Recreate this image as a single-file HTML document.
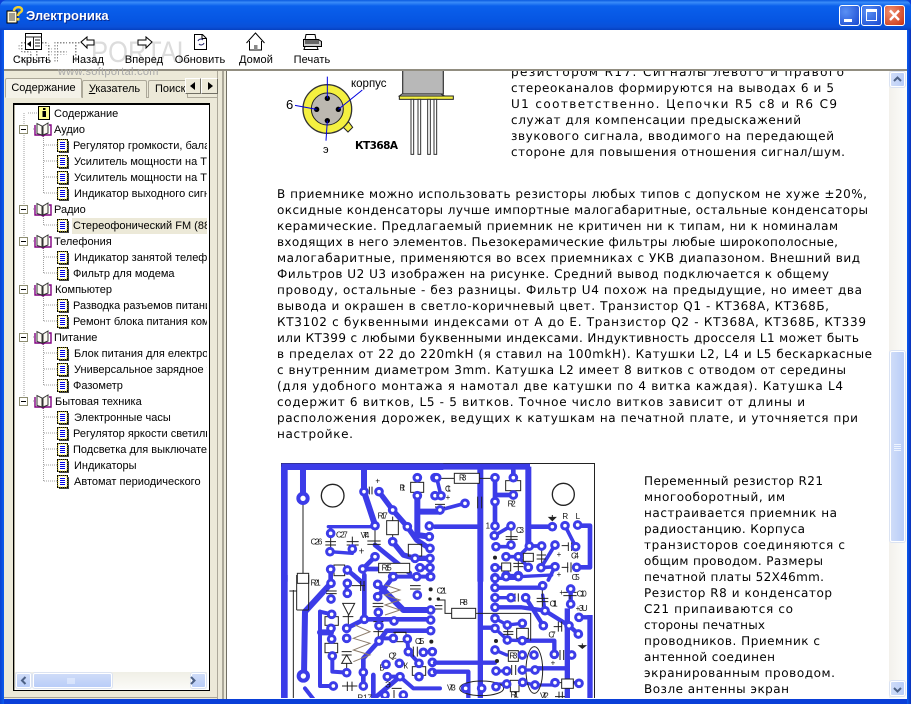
<!DOCTYPE html>
<html><head><meta charset="utf-8"><style>
html,body{margin:0;padding:0;background:#fff}
#w{position:relative;width:911px;height:704px;overflow:hidden;font-family:"Liberation Sans",sans-serif;background:#0a3fd8}
.a{position:absolute}
#title{left:0;top:0;width:911px;height:30px;background:linear-gradient(#0a5ae0 0,#3a8cf8 8%,#0a60ec 20%,#0655e2 70%,#0a50d8 90%,#0640c0 100%);border-radius:7px 7px 0 0}
#tt{left:26px;top:8px;color:#fff;font:bold 13px "Liberation Sans",sans-serif;text-shadow:1px 1px 0 #0a2a90}
.tb{top:5px;width:21px;height:21px;border:1px solid #fff;border-radius:3px;box-sizing:border-box;background:radial-gradient(circle at 30% 30%,#5a90f4,#1848d0)}
#client{left:4px;top:30px;width:903px;height:669px;background:#fff}
#tool{left:4px;top:30px;width:903px;height:39px;background:#fff;border-bottom:2px solid #918d80;box-sizing:content-box}
.lb{position:absolute;top:54px;width:56px;text-align:center;font-size:11px;color:#000;letter-spacing:.1px}
#pane{left:4px;top:71px;width:214px;height:628px;background:#ece9d8}
#split{left:218px;top:71px;width:9px;height:628px;background:#ece9d8;border-right:0}
#tree{left:13px;top:103px;width:197px;height:588px;box-sizing:border-box;border:2px solid #000;border-right:1px solid #000;border-bottom:1px solid #000;border-left:1px solid #000;background:#fff;box-shadow:inset 1px 0 #aca899}
.t{position:absolute;font-size:11px;white-space:nowrap;color:#000;line-height:14px}
.tab{position:absolute;font-size:11px;white-space:nowrap;background:#f4f2e8;border:1px solid #aca899;border-bottom:0;box-sizing:border-box;text-align:center;border-radius:2px 2px 0 0}
.sb{position:absolute;background:linear-gradient(90deg,#cfdcf8,#b9cdf8);border:1px solid #fff;border-radius:2px;box-sizing:border-box;box-shadow:0 0 0 1px #dbe3f2}
.hb{background:linear-gradient(#cfdcf8,#b9cdf8)}
</style></head><body><div id="w">
<div class="a" id="title"></div>
<svg class="a" style="left:6px;top:6px" width="18" height="18" viewBox="0 0 18 18"><rect x="1" y="5" width="10" height="12" fill="#fff8d8" stroke="#000"/><path d="M3 8h6M3 10h6M3 12h6M3 14h6" stroke="#444"/><path d="M8 5c0-5 8-5 8-1 0 3-4 2-4 6" fill="none" stroke="#f0d030" stroke-width="2.4"/><rect x="10.8" y="12" width="2.6" height="2.6" fill="#f0d030"/></svg>
<div class="a" id="tt">Электроника</div>
<div class="a tb" style="left:839px"><div class="a" style="left:4px;top:13px;width:8px;height:3px;background:#fff"></div></div>
<div class="a tb" style="left:861px"><div class="a" style="left:4px;top:3px;width:11px;height:12px;border:1px solid #fff;border-top:3px solid #fff;box-sizing:border-box"></div></div>
<div class="a tb" style="left:884px;background:radial-gradient(circle at 30% 30%,#f09070,#c83010)"><svg class="a" style="left:0;top:0" width="19" height="19"><path d="M5 4.500L14 14M14 4.500L5 14" stroke="#fff" stroke-width="2.400"/></svg></div>
<div class="a" id="client"></div>
<div class="a" id="tool"></div>

<svg class="a" style="left:0;top:30px" width="340" height="40" viewBox="0 30 340 40" font-family="'Liberation Sans',sans-serif">
<defs><pattern id="dt" width="3" height="3" patternUnits="userSpaceOnUse"><rect width="1.500" height="1.500" fill="#8a8a8a"/></pattern></defs>
<text x="17" y="62" font-size="30" font-weight="bold" fill="url(#dt)" textLength="66" lengthAdjust="spacingAndGlyphs">SOFT</text>
<text x="91" y="62" font-size="30" fill="#dcdcdc" textLength="100" lengthAdjust="spacingAndGlyphs">PORTAL</text>
</svg>
<svg class="a" style="left:0;top:30px" width="340" height="40" viewBox="0 30 340 40" fill="none" stroke="#000">
<rect x="25.500" y="33.500" width="16" height="16" fill="#fff"/><path d="M25 37h17M33.500 37v12M35 40h5M35 43h5M35 46h5" stroke="#222"/><path d="M31 41l-4 3 4 3z" fill="#000" stroke="none"/>
<path d="M81 42l6-5v3h7v5h-7v3z" fill="#fff"/>
<path d="M152 42l-6-5v3h-8v5h8v3z" fill="#fff"/>
<path d="M194.500 34.500h8l4 4v11h-12z" fill="#fff"/><path d="M202 34.500v4h4" /><path d="M198 41a3 3 0 0 1 5-1M204 43a3 3 0 0 1-5 1" stroke="#226"/>
<path d="M246.500 43l9-10 9 10M249.500 41v9h12v-9" fill="#fff"/><rect x="254" y="45" width="3.500" height="5" fill="#888" stroke="none"/>
<path d="M306 34.500h9l1 5h-11z" fill="#fff"/><path d="M303.500 39.500h15l3 2v5h-18z" fill="#ccc"/><path d="M305 46.500h12l1 3h-14zM305 41h14M305 43h14" fill="#fff"/>
</svg>
<div class="lb" style="left:4px">Скрыть</div><div class="lb" style="left:60px">Назад</div><div class="lb" style="left:116px">Вперед</div><div class="lb" style="left:172px">Обновить</div><div class="lb" style="left:228px">Домой</div><div class="lb" style="left:284px">Печать</div>

<div class="a" id="pane"></div>
<div class="a" id="split"></div>
<div class="a" style="left:58px;top:66px;font:11px 'Liberation Sans',sans-serif;color:#a8a8a8;letter-spacing:.3px;white-space:nowrap">www.softportal.com</div>
<div class="a" style="left:217px;top:71px;width:1px;height:628px;background:#aca899"></div>
<div class="a" style="left:222px;top:71px;width:2px;height:628px;background:#aca899"></div>
<div class="a" style="left:226px;top:71px;width:1px;height:628px;background:#716f64"></div>
<div class="a" style="left:4px;top:697px;width:214px;height:1px;background:#aca899"></div>
<div class="a" style="left:5px;top:97px;width:212px;height:1px;background:#aca899"></div>
<div class="tab" style="left:82px;top:80px;width:65px;height:18px;line-height:17px;background:#ece9d8"><u>У</u>казатель</div>
<div class="tab" style="left:148px;top:80px;width:40px;height:18px;line-height:17px;text-align:left;padding-left:6px;overflow:hidden;background:#ece9d8">Поиск</div>
<div class="tab" style="left:5px;top:78px;width:77px;height:20px;line-height:19px;background:#f4f2e8;border-bottom:1px solid #f4f2e8">Содержание</div>
<div class="a" style="left:185px;top:78px;width:16px;height:16px;background:#ece9d8;border:1px solid;border-color:#fff #716f64 #716f64 #fff;box-sizing:border-box"></div>
<div class="a" style="left:201px;top:78px;width:17px;height:16px;background:#ece9d8;border:1px solid;border-color:#fff #716f64 #716f64 #fff;box-sizing:border-box"></div>
<svg class="a" style="left:185px;top:78px" width="33" height="16"><path d="M5 8l5-4v8zM28 8l-5-4v8z" fill="#000"/></svg>

<div class="a" id="tree"></div>
<div class="a" style="left:72px;top:218px;width:135px;height:16px;background:#ece9d8"></div>
<svg class="a" style="left:14px;top:105px" width="194" height="390" viewBox="14 105 194 390">
<defs>
<g id="pg"><rect x="0.500" y="0.500" width="10" height="12" fill="#fff" stroke="#000"/><rect x="1" y="1" width="9" height="11" fill="none" stroke="#f0e030" stroke-dasharray="1 1"/><path d="M3 3.500h5M3 5.500h5M3 7.500h5M3 9.500h5" stroke="#0000e0"/><path d="M11.500 2v11.500H2" stroke="#444" fill="none"/></g>
<g id="bk"><path d="M1 3v10h6c1 0 1 1 2 1s1-1 2-1h6V3h-2" fill="#fff" stroke="#800080" stroke-width="1.400"/><path d="M3 1.500v10l5 1.500V4zM14 1l-5 3v9l5-2z" fill="#fbfaf2" stroke="#333"/></g>
<g id="mn"><rect x="0.500" y="0.500" width="8" height="8" fill="#fff" stroke="#8c8c70"/><path d="M2 4.500h5" stroke="#000"/></g>
</defs>
<g stroke="#a0a0a0" stroke-dasharray="1 1" fill="none">
<path d="M24 113v288M28 113h10M33 129h4M33 209h4M33 241h4M33 289h4M33 337h4M33 401h4"/>
<path d="M43.500 136v57M44 145h13M44 161h13M44 177h13M44 193h13"/>
<path d="M43.500 216v9M44 225h13"/><path d="M43.500 248v25M44 257h13M44 273h13"/>
<path d="M43.500 296v25M44 305h13M44 321h13"/><path d="M43.500 344v41M44 353h13M44 369h13M44 385h13"/>
<path d="M43.500 408v73M44 417h13M44 433h13M44 449h13M44 465h13M44 481h13"/>
</g>
<use href="#mn" x="19" y="125"/><use href="#mn" x="19" y="205"/><use href="#mn" x="19" y="237"/><use href="#mn" x="19" y="285"/><use href="#mn" x="19" y="333"/><use href="#mn" x="19" y="397"/>
<use href="#bk" x="34" y="122"/><use href="#bk" x="34" y="202"/><use href="#bk" x="34" y="234"/><use href="#bk" x="34" y="282"/><use href="#bk" x="34" y="330"/><use href="#bk" x="34" y="394"/>
<rect x="38.500" y="106.500" width="11" height="13" fill="#ffff90" stroke="#000"/><rect x="43" y="108" width="2.500" height="2" fill="#000"/><rect x="42.500" y="111" width="3.500" height="6" fill="#000"/>
<use href="#pg" x="57" y="139"/><use href="#pg" x="57" y="155"/><use href="#pg" x="57" y="171"/><use href="#pg" x="57" y="187"/><use href="#pg" x="57" y="219"/><use href="#pg" x="57" y="251"/><use href="#pg" x="57" y="267"/><use href="#pg" x="57" y="299"/><use href="#pg" x="57" y="315"/><use href="#pg" x="57" y="347"/><use href="#pg" x="57" y="363"/><use href="#pg" x="57" y="379"/><use href="#pg" x="57" y="411"/><use href="#pg" x="57" y="427"/><use href="#pg" x="57" y="443"/><use href="#pg" x="57" y="459"/><use href="#pg" x="57" y="475"/>
</svg>
<div class="a" style="left:14px;top:105px;width:193px;height:400px;overflow:hidden">
<div class="t" style="left:40px;top:2px">Содержание</div>
<div class="t" style="left:40px;top:18px">Аудио</div>
<div class="t" style="left:59px;top:34px">Регулятор громкости, баланса</div>
<div class="t" style="left:60px;top:50px">Усилитель мощности на ТDA</div>
<div class="t" style="left:60px;top:66px">Усилитель мощности на ТDA</div>
<div class="t" style="left:60px;top:82px">Индикатор выходного сигнала</div>
<div class="t" style="left:40px;top:98px">Радио</div>
<div class="t" style="left:59px;top:114px">Стереофонический FM (88-108)</div>
<div class="t" style="left:40px;top:130px">Телефония</div>
<div class="t" style="left:60px;top:146px">Индикатор занятой телефонной</div>
<div class="t" style="left:59px;top:162px">Фильтр для модема</div>
<div class="t" style="left:41px;top:178px">Компьютер</div>
<div class="t" style="left:59px;top:194px">Разводка разъемов питания</div>
<div class="t" style="left:59px;top:210px">Ремонт блока питания компьютера</div>
<div class="t" style="left:40px;top:226px">Питание</div>
<div class="t" style="left:60px;top:242px">Блок питания для електро</div>
<div class="t" style="left:60px;top:258px">Универсальное зарядное устройство</div>
<div class="t" style="left:59px;top:274px">Фазометр</div>
<div class="t" style="left:41px;top:290px">Бытовая техника</div>
<div class="t" style="left:60px;top:306px">Электронные часы</div>
<div class="t" style="left:59px;top:322px">Регулятор яркости светильника</div>
<div class="t" style="left:59px;top:338px">Подсветка для выключателя</div>
<div class="t" style="left:60px;top:354px">Индикаторы</div>
<div class="t" style="left:60px;top:370px">Автомат периодического</div>
</div>

<div class="a" style="left:15px;top:672px;width:192px;height:17px;background:linear-gradient(#f0efe6,#fbfbf8)"></div>
<div class="sb hb" style="left:16px;top:673px;width:15px;height:15px"></div>
<div class="sb hb" style="left:33px;top:673px;width:79px;height:15px"></div>
<div class="sb hb" style="left:191px;top:673px;width:15px;height:15px"></div>
<svg class="a" style="left:16px;top:673px" width="192" height="16" fill="none"><path d="M9.500 4l-3.500 3.500 3.500 3.500M175 4l3.500 3.500-3.500 3.500" stroke="#4d6185" stroke-width="2"/><path d="M52 5v6M54 5v6M56 5v6M58 5v6" stroke="#eef4ff"/></svg>

<svg class="a" style="left:227px;top:71px" width="662" height="627" viewBox="227 71 662 627" font-family="'DejaVu Sans',sans-serif" font-size="12" fill="#000">
<g text-rendering="geometricPrecision">
<text x="511" y="76" textLength="333">резистором R17. Сигналы левого и правого</text>
<text x="511" y="92" textLength="323">стереоканалов формируются на выводах 6 и 5</text>
<text x="511" y="108" textLength="326">U1 соответственно. Цепочки R5 с8 и R6 С9</text>
<text x="511" y="124" textLength="290">служат для компенсации предыскажений</text>
<text x="511" y="140" textLength="323">звукового сигнала, вводимого на передающей</text>
<text x="511" y="156" textLength="334">стороне для повышения отношения сигнал/шум.</text>
<text x="277" y="198" textLength="590">В приемнике можно использовать резисторы любых типов с допуском не хуже ±20%,</text>
<text x="277" y="214" textLength="591">оксидные конденсаторы лучше импортные малогабаритные, остальные конденсаторы</text>
<text x="277" y="230" textLength="561">керамические. Предлагаемый приемник не критичен ни к типам, ни к номиналам</text>
<text x="277" y="246" textLength="561">входящих в него элементов. Пьезокерамические фильтры любые широкополосные,</text>
<text x="277" y="262" textLength="583">малогабаритные, применяются во всех приемниках с УКВ диапазоном. Внешний вид</text>
<text x="277" y="278" textLength="552">Фильтров U2 U3 изображен на рисунке. Средний вывод подключается к общему</text>
<text x="277" y="294" textLength="585">проводу, остальные - без разницы. Фильтр U4 похож на предыдущие, но имеет два</text>
<text x="277" y="310" textLength="552">вывода и окрашен в светло-коричневый цвет. Транзистор Q1 - КТ368А, КТ368Б,</text>
<text x="277" y="326" textLength="589">КТ3102 с буквенными индексами от А до Е. Транзистор Q2 - КТ368А, КТ368Б, КТ339</text>
<text x="277" y="342" textLength="582">или КТ399 с любыми буквенными индексами. Индуктивность дросселя L1 может быть</text>
<text x="277" y="358" textLength="595">в пределах от 22 до 220mkH (я ставил на 100mkH). Катушки L2, L4 и L5 бескаркасные</text>
<text x="277" y="374" textLength="569">с внутренним диаметром 3mm. Катушка L2 имеет 8 витков с отводом от середины</text>
<text x="277" y="390" textLength="566">(для удобного монтажа я намотал две катушки по 4 витка каждая). Катушка L4</text>
<text x="277" y="406" textLength="528">содержит 6 витков, L5 - 5 витков. Точное число витков зависит от длины и</text>
<text x="277" y="422" textLength="581">расположения дорожек, ведущих к катушкам на печатной плате, и уточняется при</text>
<text x="277" y="438" textLength="76">настройке.</text>
<text x="644" y="485" textLength="179">Переменный резистор R21</text>
<text x="644" y="501" textLength="141">многооборотный, им</text>
<text x="644" y="517" textLength="193">настраивается приемник на</text>
<text x="644" y="533" textLength="161">радиостанцию. Корпуса</text>
<text x="644" y="549" textLength="201">транзисторов соединяются с</text>
<text x="644" y="565" textLength="179">общим проводом. Размеры</text>
<text x="644" y="581" textLength="180">печатной платы 52Х46mm.</text>
<text x="644" y="597" textLength="188">Резистор R8 и конденсатор</text>
<text x="644" y="613" textLength="149">С21 припаиваются со</text>
<text x="644" y="629" textLength="121">стороны печатных</text>
<text x="644" y="645" textLength="176">проводников. Приемник с</text>
<text x="644" y="661" textLength="131">антенной соединен</text>
<text x="644" y="677" textLength="191">экранированным проводом.</text>
<text x="644" y="693" textLength="145">Возле антенны экран</text>
</g>

<!-- transistor -->
<g transform="translate(230 60) scale(.33333)">
<path d="M338 200l18-14 12 16-14 14z" fill="#f4f040" stroke="#222" stroke-width="3"/>
<circle cx="292" cy="147" r="73" fill="#f4f040" stroke="#333" stroke-width="4"/>
<circle cx="292" cy="147" r="48" fill="#bcb8b0" stroke="#222" stroke-width="3"/>
<g fill="#000"><circle cx="292" cy="115" r="8"/><circle cx="260" cy="148" r="8"/><circle cx="325" cy="148" r="8"/><circle cx="292" cy="182" r="8"/></g>
<path d="M292 50v65M195 136l65 12M397 90l-72 58M292 182l-4 60" stroke="#0000e0" stroke-width="3" fill="none"/>
<rect x="518" y="30" width="122" height="72" fill="#b8b8b8" stroke="#444" stroke-width="4"/>
<path d="M516 102h116l12 6H508z" fill="#ccc" stroke="#333" stroke-width="3"/>
<rect x="508" y="108" width="162" height="10" fill="#f4f040" stroke="#222" stroke-width="3"/>
<g fill="#fff" stroke="#333" stroke-width="3"><path d="M543 118h8v165h-8zM564 118h8v165h-8zM593 118h8v165h-8zM612 118h8v165h-8z"/></g>
</g>
<text x="351" y="87" font-family="'Liberation Sans',sans-serif" font-size="11.500">корпус</text>
<text x="286" y="109" font-family="'Liberation Sans',sans-serif" font-size="13">6</text>
<text x="323" y="153" font-family="'Liberation Sans',sans-serif" font-size="11">э</text>
<text x="355" y="149" font-family="'DejaVu Sans',sans-serif" font-weight="bold" font-size="10.500" textLength="43">КТ368А</text>

<!-- PCB -->
<rect x="281.500" y="463.500" width="313" height="240" fill="#fff" stroke="#222"/>
<defs>
<g id="p"><circle r="10" fill="#fff" stroke="#3c3ce8" stroke-width="9"/></g>
<g id="P"><circle r="14" fill="#fff" stroke="#3c3ce8" stroke-width="12"/></g>
</defs>
<g font-family="'Liberation Sans',sans-serif" font-size="24" fill="#111">
<g transform="translate(270 455) scale(.33333)">
<g fill="none" stroke="#3c3ce8" stroke-linejoin="round" stroke-linecap="round">
<path d="M34 35H520M43 35V380" stroke-width="20" stroke-linecap="butt"/>
<path d="M99 45V130M282 45V110L315 210M442 122V240L478 245M442 170H510" stroke-width="18"/>
<path d="M327 110L368 165L412 215L440 255L478 280M368 260L400 300L435 310H480" stroke-width="16"/>
<path d="M175 215H315M180 290L247 295V282M182 235V215" stroke-width="10"/>
<path d="M315 305L278 342M315 270L420 355M182 343V380M232 345L280 385M278 342H330" stroke-width="14"/>
<path d="M440 338H480M360 365H480" stroke-width="12"/>
</g>
<g fill="none" stroke="#222" stroke-width="3">
<circle cx="188" cy="122" r="34" stroke-width="4"/><path d="M99 130V355M315 212V270M368 185V260M166 260H198M166 270H198M230 260H266M230 270H266M292 258H332M292 268H332M306 95V118M298 95V118M182 245V285M247 245V285"/>
<rect x="422" y="82" width="39" height="30" fill="#fff"/><rect x="350" y="197" width="35" height="42" fill="#fff"/><rect x="415" y="268" width="40" height="35" fill="#fff" fill-opacity=".2"/><rect x="326" y="325" width="93" height="28" fill="#fff"/><rect x="192" y="330" width="32" height="32" fill="#fff"/><rect x="82" y="355" width="34" height="30" fill="#fff"/>
</g>
<text x="388" y="106" textLength="18">R1</text><text x="323" y="190" textLength="30">R17</text><text x="122" y="268" textLength="35">C26</text><text x="198" y="247" textLength="35">C27</text><text x="272" y="249" textLength="26">VT4</text><text x="335" y="346" textLength="30">R15</text><text x="316" y="86">+</text><text x="266" y="299" font-size="30">+</text>
<use href="#P" x="99" y="130"/>
<use href="#p" x="282" y="110"/><use href="#p" x="327" y="110"/><use href="#p" x="368" y="165"/><use href="#p" x="412" y="215"/><use href="#p" x="182" y="235"/><use href="#p" x="180" y="290"/><use href="#p" x="247" y="282"/><use href="#p" x="315" y="212"/><use href="#p" x="315" y="305"/><use href="#p" x="278" y="342"/><use href="#p" x="182" y="343"/><use href="#p" x="232" y="345"/><use href="#p" x="368" y="260"/><use href="#p" x="435" y="310"/><use href="#p" x="480" y="310"/><use href="#p" x="480" y="280"/><use href="#p" x="478" y="245"/><use href="#p" x="450" y="338"/><use href="#p" x="480" y="338"/><use href="#p" x="368" y="365"/><use href="#p" x="480" y="365"/><use href="#p" x="442" y="68"/><use href="#p" x="442" y="122"/><use href="#p" x="495" y="68"/><use href="#p" x="495" y="122"/><use href="#p" x="478" y="213"/>
</g>
<g transform="translate(270 575) scale(.33333)">
<g fill="none" stroke="#3c3ce8" stroke-linejoin="round" stroke-linecap="round">
<path d="M43 0V372" stroke-width="20" stroke-linecap="butt"/>
<path d="M183 25L105 110L102 300M323 28L400 105H482M150 172H183" stroke-width="18"/>
<path d="M230 160L283 133H482M283 133V0M250 0L283 30M370 5L323 65M327 198L280 250V333M482 167H350L327 198M310 300V372L390 305" stroke-width="14"/>
<path d="M150 110V330M187 243V290L230 293M412 192L415 230L447 265V305M370 190H327M352 305H390L430 340H510M190 333H150M230 50V30" stroke-width="12"/>
<path d="M130 372L105 340M185 118L150 110" stroke-width="12"/>
</g>
<g fill="none" stroke="#8c7c6c" stroke-width="3"><path d="M345 30L390 45L345 60L390 75L345 90L390 105L345 120M255 150L300 170L250 190L300 205L250 225L300 240L250 260"/></g>
<g fill="none" stroke="#222" stroke-width="3">
<path d="M70 45V372M58 48H80M80 105V0M116 0V105M80 105H116M245 32H285M272 18V48M282 18V48M168 48H200M168 56H200M218 85H254L236 120zM218 125H250M235 120V160M215 230H245M215 240H245M215 265H245L230 240zM230 265V293M216 333H262M232 320V348M246 320V348M308 85H340M308 95H340M310 140H340M310 170H340M325 160V190M430 215V245M442 215V245M420 32H452M420 42H452M370 172H408M365 340H395M372 345V372"/>
<rect x="165" y="125" width="40" height="26" fill="#fff"/><rect x="165" y="205" width="38" height="28" fill="#fff"/><rect x="375" y="172" width="33" height="28" fill="none"/><rect x="427" y="275" width="40" height="26" fill="#fff"/>
</g>
<text x="122" y="32" textLength="30">R21</text><text x="435" y="207" textLength="28">C15</text><text x="356" y="251" textLength="24">Q2</text><text x="328" y="287">Б</text><text x="400" y="280">К</text><text x="345" y="338">Э</text><text x="262" y="376">R17</text>
<circle cx="482" cy="43" r="6" fill="#222"/><circle cx="480" cy="72" r="5" fill="#222"/><circle cx="484" cy="200" r="6" fill="#222"/>
<use href="#p" x="183" y="25"/><use href="#p" x="183" y="72"/><use href="#p" x="232" y="25"/><use href="#p" x="232" y="55"/><use href="#p" x="185" y="118"/><use href="#p" x="183" y="160"/><use href="#p" x="185" y="192"/><use href="#p" x="187" y="243"/><use href="#p" x="230" y="160"/><use href="#p" x="230" y="190"/><use href="#p" x="323" y="28"/><use href="#p" x="323" y="65"/><use href="#p" x="325" y="112"/><use href="#p" x="327" y="152"/><use href="#p" x="370" y="5"/><use href="#p" x="372" y="138"/><use href="#p" x="283" y="133"/><use href="#p" x="370" y="190"/><use href="#p" x="327" y="198"/><use href="#p" x="412" y="192"/><use href="#p" x="415" y="230"/><use href="#p" x="388" y="265"/><use href="#p" x="348" y="268"/><use href="#p" x="280" y="292"/><use href="#p" x="230" y="293"/><use href="#p" x="190" y="333"/><use href="#p" x="280" y="333"/><use href="#p" x="352" y="305"/><use href="#p" x="390" y="305"/><use href="#p" x="447" y="265"/><use href="#p" x="447" y="305"/><use href="#p" x="487" y="262"/><use href="#p" x="487" y="292"/><use href="#p" x="460" y="232"/><use href="#p" x="487" y="230"/><use href="#p" x="482" y="105"/><use href="#p" x="482" y="135"/><use href="#p" x="482" y="167"/><use href="#p" x="440" y="5"/><use href="#p" x="482" y="5"/><use href="#p" x="442" y="60"/><use href="#p" x="345" y="360"/><use href="#p" x="400" y="360"/>
<use href="#P" x="100" y="303"/>
</g>
<g transform="translate(435 455) scale(.33333)">
<g fill="none" stroke="#3c3ce8" stroke-linejoin="round" stroke-linecap="round">
<path d="M0 35H285M136 35V380M280 35V275" stroke-width="18" stroke-linecap="butt"/>
<path d="M180 68V213M180 120H235M235 45V68M0 215H128M283 215H352M428 212H465V337H425" stroke-width="14"/>
<path d="M178 242L228 213M183 275H228M390 212L422 275M360 270L318 338M250 305L283 273H320M318 338L360 335L340 375M213 305H250M180 338H213M250 362L213 362M280 337L250 305M18 122L5 68M15 165L90 145" stroke-width="11"/>
</g>
<g fill="none" stroke="#222" stroke-width="3">
<path d="M5 70H180M235 80V110M140 125V160M128 125V160M0 148H30M0 156H30M212 245H248M212 253H248M228 225V270M235 325H265M235 335H265M250 310V355M305 300H333M305 312H333M320 285V325M380 272H400M400 262V288M410 262V288M410 272H420M380 337H400M398 322V352M408 322V352"/>
<rect x="58" y="55" width="75" height="30" fill="#fff"/><rect x="212" y="77" width="45" height="30" fill="#fff"/><rect x="265" y="295" width="30" height="24" fill="#fff"/><rect x="200" y="324" width="27" height="24" fill="#fff"/>
<circle cx="385" cy="118" r="33" stroke-width="4"/>
<path d="M352 180V195M342 187H362L352 197z" fill="#222"/>
</g>
<circle cx="180" cy="308" r="6" fill="#222"/>
<text x="72" y="77" textLength="22">R3</text><text x="30" y="110" textLength="18">C1</text><text x="32" y="135">+</text><text x="218" y="155" textLength="24">R2</text><text x="152" y="221">1</text><text x="243" y="234" textLength="24">C3</text><text x="382" y="192">R</text><text x="422" y="192">L</text><text x="408" y="311" textLength="24">C4</text><text x="410" y="375" textLength="24">C5</text><text x="365" y="306">+</text><text x="365" y="366">+</text>
<use href="#p" x="5" y="68"/><use href="#p" x="18" y="122"/><use href="#p" x="15" y="165"/><use href="#p" x="90" y="145"/><use href="#p" x="180" y="68"/><use href="#p" x="180" y="140"/><use href="#p" x="180" y="213"/><use href="#p" x="235" y="68"/><use href="#p" x="235" y="120"/><use href="#p" x="178" y="242"/><use href="#p" x="228" y="213"/><use href="#p" x="183" y="275"/><use href="#p" x="228" y="270"/><use href="#p" x="283" y="273"/><use href="#p" x="320" y="273"/><use href="#p" x="213" y="305"/><use href="#p" x="250" y="305"/><use href="#p" x="360" y="270"/><use href="#p" x="422" y="275"/><use href="#p" x="352" y="215"/><use href="#p" x="390" y="212"/><use href="#p" x="428" y="210"/><use href="#p" x="360" y="335"/><use href="#p" x="425" y="337"/><use href="#p" x="180" y="338"/><use href="#p" x="213" y="362"/><use href="#p" x="250" y="362"/><use href="#p" x="280" y="337"/><use href="#p" x="318" y="338"/><use href="#p" x="180" y="368"/>
</g>
<g transform="translate(435 575) scale(.33333)">
<g fill="none" stroke="#3c3ce8" stroke-linejoin="round" stroke-linecap="round">
<path d="M136 0V372M397 100V372M465 120V372" stroke-width="16" stroke-linecap="butt"/>
<path d="M180 38H323M272 68L325 152M180 97H260L330 107L402 152L430 177M0 263H128M0 290H100V372M143 158H180M262 197H358V238M305 280H390M143 263H180M407 42V87M432 127H465" stroke-width="13"/>
<path d="M180 68H228M180 130L217 150L262 145M180 160L217 195L262 197M180 225L215 240H262M183 288H215M262 285H300M263 322L300 330H360M215 327H183M405 323H432M330 107L323 60M180 10H250M250 5L350 0" stroke-width="10"/>
</g>
<g fill="none" stroke="#222" stroke-width="3">
<path d="M10 75H30V115H50M122 115H287V197M240 55V80M250 55V80M305 70H340M305 80H340M322 40V105M356 155H380M370 140V170M380 140V170M205 170H235M205 178H235M218 150V195M375 225V255M386 225V255M230 270V300M242 270V300M350 323H430M385 52H425M385 62H425M405 62V90M0 92H22M0 102H22M360 365H390M372 350V380M382 350V380"/>
<rect x="50" y="100" width="72" height="30" fill="#fff"/><rect x="245" y="160" width="35" height="30" fill="none"/><rect x="220" y="227" width="30" height="32" fill="#fff"/><rect x="226" y="316" width="26" height="34" fill="#fff"/><rect x="380" y="312" width="35" height="28" fill="#fff"/>
<ellipse cx="140" cy="340" rx="66" ry="22"/><ellipse cx="298" cy="285" rx="25" ry="70"/>
<path d="M442 205V213M432 212H452L442 220z" fill="#222"/>
</g>
<circle cx="10" cy="72" r="5" fill="#222"/><circle cx="183" cy="198" r="6" fill="#222"/><circle cx="186" cy="258" r="6" fill="#222"/>
<text x="5" y="56" textLength="30">C21</text><text x="74" y="90" textLength="24">R8</text><text x="344" y="95" textLength="24">C11</text><text x="425" y="65" textLength="30">C10</text><text x="422" y="108" textLength="36">+3U</text><text x="340" y="188" textLength="22">C7</text><text x="223" y="250" textLength="24">R3</text><text x="227" y="368" textLength="24">R11</text><text x="36" y="347" textLength="26">VT3</text><text x="315" y="370" textLength="26">VT2</text><text x="373" y="60">+</text><text x="347" y="272">+</text>
<use href="#p" x="180" y="10"/><use href="#p" x="213" y="5"/><use href="#p" x="250" y="5"/><use href="#p" x="180" y="38"/><use href="#p" x="323" y="32"/><use href="#p" x="407" y="42"/><use href="#p" x="180" y="68"/><use href="#p" x="228" y="68"/><use href="#p" x="272" y="68"/><use href="#p" x="180" y="97"/><use href="#p" x="330" y="107"/><use href="#p" x="407" y="87"/><use href="#p" x="432" y="127"/><use href="#p" x="180" y="130"/><use href="#p" x="217" y="150"/><use href="#p" x="262" y="145"/><use href="#p" x="325" y="152"/><use href="#p" x="402" y="152"/><use href="#p" x="430" y="177"/><use href="#p" x="180" y="160"/><use href="#p" x="217" y="195"/><use href="#p" x="262" y="197"/><use href="#p" x="180" y="225"/><use href="#p" x="262" y="240"/><use href="#p" x="297" y="240"/><use href="#p" x="358" y="238"/><use href="#p" x="410" y="240"/><use href="#p" x="183" y="288"/><use href="#p" x="215" y="288"/><use href="#p" x="262" y="285"/><use href="#p" x="300" y="285"/><use href="#p" x="183" y="335"/><use href="#p" x="215" y="327"/><use href="#p" x="263" y="322"/><use href="#p" x="300" y="330"/><use href="#p" x="360" y="323"/><use href="#p" x="432" y="325"/><use href="#p" x="92" y="340"/><use href="#p" x="140" y="340"/>
</g>
</g>
</svg>

<div class="a" style="left:889px;top:71px;width:18px;height:627px;background:linear-gradient(90deg,#f3f1ec,#fdfdfa)"></div>
<div class="sb" style="left:890px;top:72px;width:15px;height:15px"></div>
<div class="sb" style="left:890px;top:351px;width:15px;height:191px"></div>
<div class="sb" style="left:890px;top:681px;width:15px;height:15px"></div>
<svg class="a" style="left:890px;top:72px" width="16" height="625" fill="none"><path d="M4 9l3.500-3.500L11 9M4 616l3.500 3.500L11 616" stroke="#4d6185" stroke-width="2"/><path d="M4 372.500h7M4 374.500h7M4 376.500h7M4 378.500h7" stroke="#eef4ff"/></svg>

<div class="a" style="left:0;top:699px;width:911px;height:5px;background:#0a3fd8"></div>
<div class="a" style="left:0;top:30px;width:4px;height:674px;background:linear-gradient(90deg,#0a40d0,#0a5cf0)"></div>
<div class="a" style="left:907px;top:30px;width:4px;height:674px;background:linear-gradient(90deg,#0a5cf0,#0a30b8)"></div>
</div></body></html>
